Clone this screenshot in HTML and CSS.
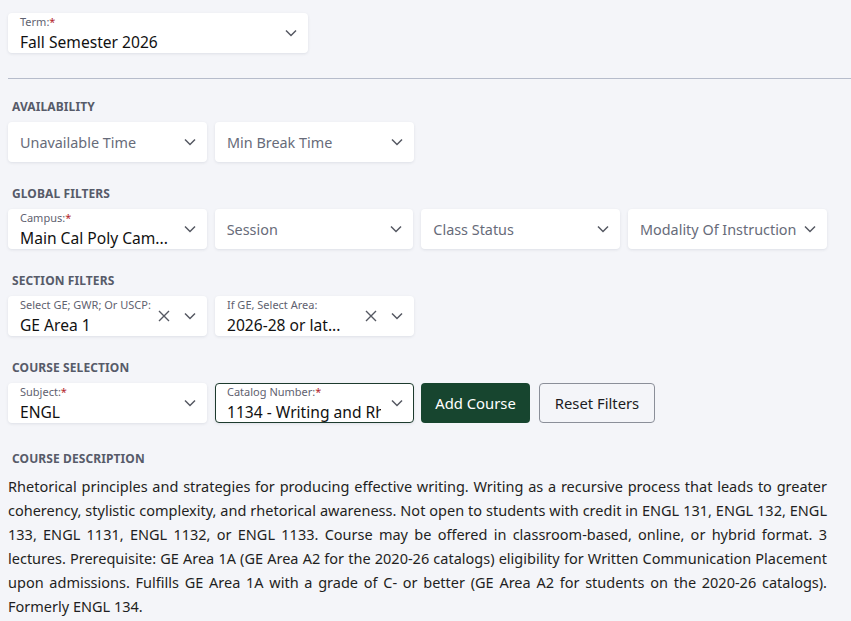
FILE: index.html
```html
<!DOCTYPE html>
<html lang="en">
<head>
  <meta charset="UTF-8">
  <title>Schedule Builder - Course Search</title>
  <link rel="stylesheet" href="styles.css">
</head>
<body>
  <div class="page">

    <div class="row">
      <div class="select term">
        <div class="select-text stacked">
          <span class="select-label">Term:<b>*</b></span>
          <span class="select-value">Fall Semester 2026</span>
        </div>
        <svg class="chevron" viewBox="0 0 12 8"><path d="M1 1.5l5 5 5-5"/></svg>
      </div>
    </div>

    <hr class="divider">

    <div class="group first">
      <div class="group-title">Availability</div>
      <div class="row">
        <div class="select">
          <div class="select-text"><span class="placeholder">Unavailable Time</span></div>
          <svg class="chevron" viewBox="0 0 12 8"><path d="M1 1.5l5 5 5-5"/></svg>
        </div>
        <div class="select">
          <div class="select-text"><span class="placeholder">Min Break Time</span></div>
          <svg class="chevron" viewBox="0 0 12 8"><path d="M1 1.5l5 5 5-5"/></svg>
        </div>
      </div>
    </div>

    <div class="group">
      <div class="group-title">Global Filters</div>
      <div class="row">
        <div class="select">
          <div class="select-text stacked">
            <span class="select-label">Campus:<b>*</b></span>
            <span class="select-value">Main Cal Poly Cam...</span>
          </div>
          <svg class="chevron" viewBox="0 0 12 8"><path d="M1 1.5l5 5 5-5"/></svg>
        </div>
        <div class="select">
          <div class="select-text"><span class="placeholder">Session</span></div>
          <svg class="chevron" viewBox="0 0 12 8"><path d="M1 1.5l5 5 5-5"/></svg>
        </div>
        <div class="select">
          <div class="select-text"><span class="placeholder">Class Status</span></div>
          <svg class="chevron" viewBox="0 0 12 8"><path d="M1 1.5l5 5 5-5"/></svg>
        </div>
        <div class="select">
          <div class="select-text"><span class="placeholder">Modality Of Instruction</span></div>
          <svg class="chevron" viewBox="0 0 12 8"><path d="M1 1.5l5 5 5-5"/></svg>
        </div>
      </div>
    </div>

    <div class="group">
      <div class="group-title">Section Filters</div>
      <div class="row">
        <div class="select">
          <div class="select-text stacked">
            <span class="select-label">Select GE; GWR; Or USCP:</span>
            <span class="select-value">GE Area 1</span>
          </div>
          <svg class="clear" viewBox="0 0 12 12"><path d="M1 1l10 10M11 1L1 11"/></svg>
          <svg class="chevron" viewBox="0 0 12 8"><path d="M1 1.5l5 5 5-5"/></svg>
        </div>
        <div class="select">
          <div class="select-text stacked">
            <span class="select-label">If GE, Select Area:</span>
            <span class="select-value">2026-28 or lat...</span>
          </div>
          <svg class="clear" viewBox="0 0 12 12"><path d="M1 1l10 10M11 1L1 11"/></svg>
          <svg class="chevron" viewBox="0 0 12 8"><path d="M1 1.5l5 5 5-5"/></svg>
        </div>
      </div>
    </div>

    <div class="group">
      <div class="group-title">Course Selection</div>
      <div class="row">
        <div class="select">
          <div class="select-text stacked">
            <span class="select-label">Subject:<b>*</b></span>
            <span class="select-value">ENGL</span>
          </div>
          <svg class="chevron" viewBox="0 0 12 8"><path d="M1 1.5l5 5 5-5"/></svg>
        </div>
        <div class="select focused">
          <div class="select-text stacked">
            <span class="select-label">Catalog Number:<b>*</b></span>
            <span class="select-value">1134 - Writing and Rhetoric</span>
          </div>
          <svg class="chevron" viewBox="0 0 12 8"><path d="M1 1.5l5 5 5-5"/></svg>
        </div>
        <button class="btn btn-primary">Add Course</button>
        <button class="btn btn-outline">Reset Filters</button>
      </div>
    </div>

    <div class="group description">
      <div class="group-title">Course Description</div>
      <p class="description-text">
        <span class="line">Rhetorical principles and strategies for producing effective writing. Writing as a recursive process that leads to greater</span>
        <span class="line">coherency, stylistic complexity, and rhetorical awareness. Not open to students with credit in ENGL 131, ENGL 132, ENGL</span>
        <span class="line">133, ENGL 1131, ENGL 1132, or ENGL 1133. Course may be offered in classroom-based, online, or hybrid format. 3</span>
        <span class="line">lectures. Prerequisite: GE Area 1A (GE Area A2 for the 2020-26 catalogs) eligibility for Written Communication Placement</span>
        <span class="line">upon admissions. Fulfills GE Area 1A with a grade of C- or better (GE Area A2 for students on the 2020-26 catalogs).</span>
        <span>Formerly ENGL 134.</span>
      </p>
    </div>

  </div>
</body>
</html>
```

FILE: styles.css
```css
body {
  margin: 0;
  background: #f4f5f9;
  font-family: "Noto Sans", "Open Sans", sans-serif;
  color: #1c1c1f;
}

.page {
  padding: 13px 24px 0 8px;
}

.row {
  display: flex;
  gap: 8px;
}

.select {
  box-sizing: border-box;
  width: 199px;
  height: 40px;
  background: white;
  border: 1px solid transparent;
  border-radius: 4px;
  box-shadow: 0 1px 3px rgba(30, 40, 70, 0.1);
  display: flex;
  align-items: center;
  padding: 0 10px 0 11px;
  gap: 10px;
}

.select.term {
  width: 300px;
}

.select.focused {
  border-color: #1d3b2e;
}

.select-text {
  flex: 1;
  min-width: 0;
  display: flex;
  flex-direction: column;
}

.select-text.stacked {
  align-self: stretch;
  padding-top: 1px;
}

.select-label {
  flex: none;
  font-size: 11px;
  line-height: 14px;
  color: #5f6270;
  white-space: nowrap;
}

.select-label b {
  font-weight: normal;
  color: #b3262d;
}

.select-value {
  flex: none;
  font-size: 15.6px;
  line-height: 20px;
  margin-top: 3px;
  color: #111;
  white-space: nowrap;
  overflow: hidden;
}

.placeholder {
  font-size: 14.4px;
  color: #676b79;
  white-space: nowrap;
}

.chevron {
  width: 12px;
  height: 8px;
  flex: none;
  fill: none;
  stroke: #555862;
  stroke-width: 1.5;
}

.clear {
  width: 12px;
  height: 12px;
  flex: none;
  fill: none;
  stroke: #555862;
  stroke-width: 1.4;
  margin-right: 4px;
}

.divider {
  border: none;
  border-top: 1px solid #b6bccb;
  margin: 25px -24px 0 0;
}

.group {
  margin-top: 24px;
}

.group.first {
  margin-top: 20px;
}

.group-title {
  font-size: 12px;
  line-height: 16px;
  font-weight: bold;
  letter-spacing: 0.1px;
  text-transform: uppercase;
  color: #575b69;
  padding-left: 4px;
  margin-bottom: 7px;
}

.btn {
  height: 40px;
  border-radius: 4px;
  font-family: inherit;
  font-size: 14.8px;
  padding: 0;
  white-space: nowrap;
  cursor: pointer;
}

.btn-primary {
  background: #17452f;
  color: white;
  border: none;
  width: 109px;
  margin-left: -1px;
}

.btn-outline {
  background: #f4f5f9;
  color: #1c1c1f;
  border: 1px solid #8b8f99;
  width: 116px;
  margin-left: 1px;
}

.description {
  margin-top: 28px;
}

.description-text {
  margin: 0;
  font-size: 14.5px;
  line-height: 24px;
  color: #1f1f22;
}

.description-text .line {
  display: block;
  text-align: justify;
  text-align-last: justify;
}
```
